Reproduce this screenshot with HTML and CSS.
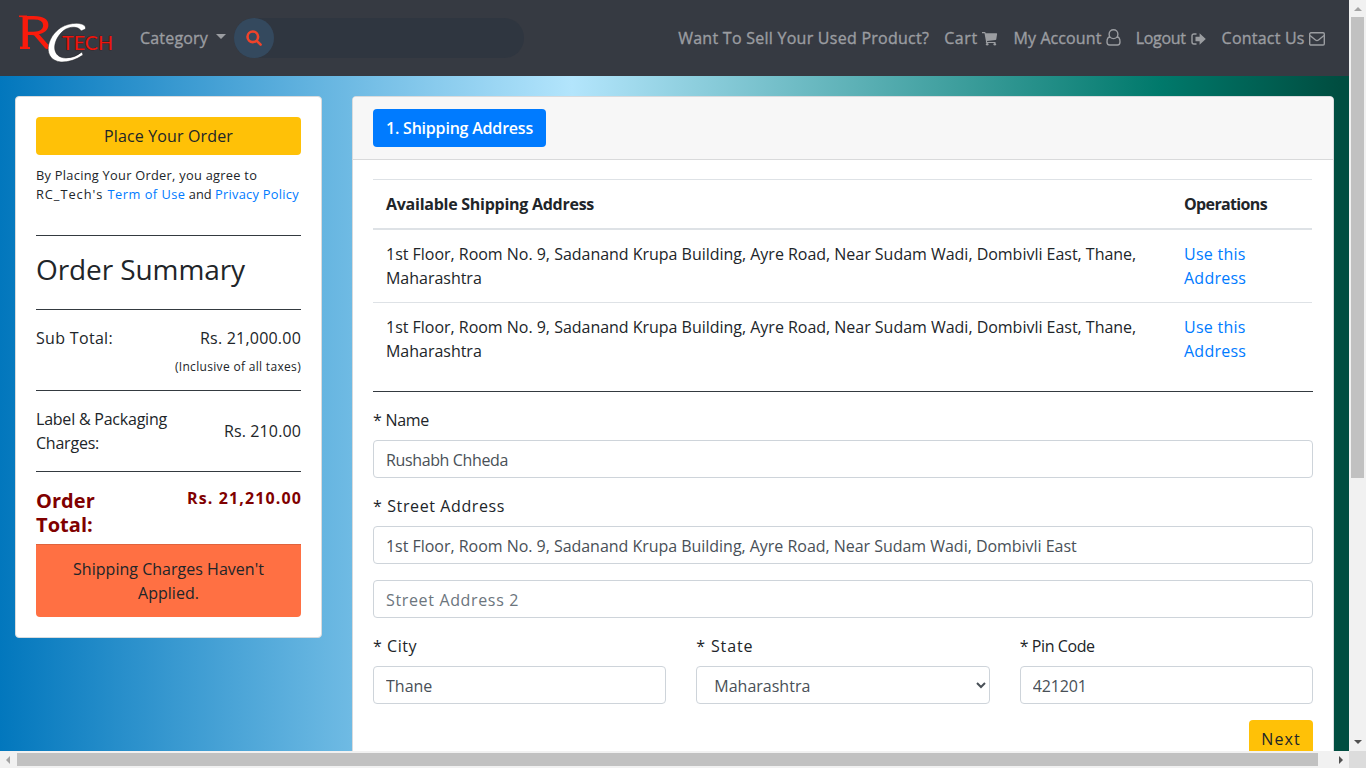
FILE: index.html
```html
<!DOCTYPE html>
<html lang="en">
<head>
<meta charset="utf-8">
<title>RC Tech - Checkout</title>
<link rel="stylesheet" href="styles.css">
</head>
<body>
<div class="window">
  <div class="page">
    <nav class="navbar">
      <svg class="logo" width="100" height="50" viewBox="0 0 100 50">
        <g class="logo-r"><text transform="translate(1.500 36) scale(1.18 1)" font-size="47">R</text><path d="M3 2.500H11V4.500L3 4ZM4 33.500L14 34V36H4ZM29 30L34 33Q38 40 42 45Q36 42 31 35Z"/></g>
        <path class="logo-c" d="M65 18C64 14 54 12 47 18C35 29 36 45 50 45Q59 45 66 39L67 42Q56 49.500 45 49C26 47 30 24 45 14.500C56 8 71 9.500 69.500 16Z"/>
        <text class="logo-tech" x="46" y="37" textLength="51" lengthAdjust="spacingAndGlyphs">TECH</text>
      </svg>
      <a class="link category">Category</a><span class="caret"></span>
      <div class="search"><span class="search-btn"><svg width="16" height="16" viewBox="0 0 16 16"><circle cx="6.8" cy="6.8" r="5.3"/><path d="M10.8 10.8L14.6 14.6"/></svg></span></div>
      <div class="links">
        <a class="link sell">Want To Sell Your Used Product?</a>
        <a class="link cart">Cart <svg width="16" height="14" viewBox="0 0 16 14"><path class="fill" d="M0 0H2.8Q3.4 0 3.7 1.2H14.5Q15.2 1.2 15.1 2L14.3 7.2Q14.2 7.9 13.4 8L5 8.9L5.2 9.9H13.5V11H4.5Q3.7 11 3.8 10.2L4 9.6L2.5 1.2H0Z"/><circle class="fill" cx="5.2" cy="12.2" r="1.3"/><circle class="fill" cx="12.8" cy="12.2" r="1.3"/></svg></a>
        <a class="link account">My Account <svg width="15" height="17" viewBox="0 0 15 17"><path class="line" d="M4 8C2 8 1 10 1 13Q1 16 3.6 16H11.4Q14 16 14 13C14 10 13 8 11 8M7.5 .8A4 4 0 0 1 7.5 9.6A4 4 0 0 1 7.5 .8Z"/></svg></a>
        <a class="link logout">Logout <svg width="15" height="12" viewBox="0 0 15 12"><path class="line" d="M5.5 1H3Q1 1 1 3V9Q1 11 3 11H5.5"/><path class="fill" d="M4.5 3.8H8.6V.3L14.8 6L8.6 11.7V8.2H4.5Z"/></svg></a>
        <a class="link contact">Contact Us <svg width="16" height="14" viewBox="0 0 16 14"><rect class="line" x=".7" y=".8" width="14.6" height="12.2" rx="1.2"/><path class="line" d="M1 3.5L6.5 8Q8 9.2 9.5 8L15 3.5"/></svg></a>
      </div>
    </nav>

    <div class="columns">
      <aside class="card summary">
        <button class="btn place">Place Your Order</button>
        <p class="terms"><span class="t-agree">By Placing Your Order, you agree to</span><br><span class="t-rc">RC_Tech's</span> <a class="t-use">Term of Use</a> <span class="t-and">and</span> <a class="t-priv">Privacy Policy</a></p>
        <hr>
        <h3>Order Summary</h3>
        <hr>
        <div class="row"><span class="sub-label">Sub Total:</span><span class="sub-price">Rs. 21,000.00</span></div>
        <div class="taxes">(Inclusive of all taxes)</div>
        <hr>
        <div class="row middle"><span class="pack-label">Label &amp; Packaging Charges:</span><span class="pack-price">Rs. 210.00</span></div>
        <hr>
        <div class="row total"><h5>Order Total:</h5><b>Rs. 21,210.00</b></div>
        <div class="notice">Shipping Charges Haven't Applied.</div>
      </aside>

      <main class="card shipping">
        <header class="card-header"><button class="btn step">1. Shipping Address</button></header>
        <div class="card-body">
          <table>
            <thead><tr><th class="th-address">Available Shipping Address</th><th class="th-op">Operations</th></tr></thead>
            <tbody>
              <tr><td>1st Floor, Room No. 9, Sadanand Krupa Building, Ayre Road, Near Sudam Wadi, Dombivli East, Thane,<br>Maharashtra</td><td class="use"><a>Use this<br>Address</a></td></tr>
              <tr><td>1st Floor, Room No. 9, Sadanand Krupa Building, Ayre Road, Near Sudam Wadi, Dombivli East, Thane,<br>Maharashtra</td><td class="use"><a>Use this<br>Address</a></td></tr>
            </tbody>
          </table>
          <hr class="divider">
          <div class="group"><label class="l-name">* Name</label><input class="i-name" value="Rushabh Chheda"></div>
          <div class="group"><label class="l-street">* Street Address</label><input class="i-street" value="1st Floor, Room No. 9, Sadanand Krupa Building, Ayre Road, Near Sudam Wadi, Dombivli East"></div>
          <div class="group"><input class="i-street2" placeholder="Street Address 2"></div>
          <div class="thirds">
            <div class="group"><label class="l-city">* City</label><input value="Thane"></div>
            <div class="group"><label class="l-state">* State</label><select><option>Maharashtra</option></select></div>
            <div class="group"><label class="l-pin">* Pin Code</label><input class="i-pin" value="421201"></div>
          </div>
          <div class="actions"><button class="btn next">Next</button></div>
        </div>
      </main>
    </div>
  </div>
  <div class="vbar"><i class="arrow up"></i><span class="vthumb"></span><i class="arrow down"></i></div>
  <div class="hbar"><i class="arrow left"></i><span class="hthumb"></span><i class="arrow right"></i></div>
  <div class="corner"></div>
</div>
</body>
</html>
```
FILE: styles.css
```css
*{box-sizing:border-box}
body{margin:0;overflow:hidden;font:16px/24px "Comic Sans MS","Open Sans",sans-serif;color:#212529}
button,input,select{font:inherit;color:inherit}
a{color:#007bff;text-decoration:none}
.window{display:grid;grid-template:751px 17px / 1349px 17px;width:1366px;height:768px}
.page{overflow:hidden;background:linear-gradient(90deg,#0277bd 0,#b3e5fc 572px,#00796b 1160px,#004d40 1340px)}

/* Navigation */
.navbar{display:flex;align-items:center;height:76px;padding:0 24px 0 16px;background:#363a42}
.logo{flex:none;margin-right:24px;overflow:visible}
.logo-r text{font-family:Lato,sans-serif;font-weight:400}
.logo-r{fill:#f91b0c}
.logo-c{fill:#fff;stroke:#202227;stroke-width:.5}
.logo-tech{font:20px Lato,sans-serif;fill:#ed160d;stroke:#3a1215;stroke-width:.6;paint-order:stroke}
.link{color:#9b9da1;-webkit-text-stroke:.35px #9b9da1;white-space:nowrap}
.category{letter-spacing:.18px}
.caret{margin:-3px 8px 0 8px;border:5px solid transparent;border-top-color:#9b9da1;border-bottom:0}
.search{width:290px;height:40px;border-radius:20px;background:#2f3640}
.search-btn{display:grid;place-items:center;width:40px;height:40px;border-radius:50%;background:#34495e}
.search-btn svg{fill:none;stroke:#f0432a;stroke-width:2.6;stroke-linecap:round}
.links{display:flex;align-items:center;gap:15px;margin-left:auto}
.link svg{vertical-align:-2px}
.links .cart svg{margin-left:-1px}
.links .logout svg{margin-left:1px;vertical-align:-1px}
.fill{fill:#9b9da1}
.line{fill:none;stroke:#9b9da1;stroke-width:1.4}
.sell{letter-spacing:.26px}
.cart{letter-spacing:.6px;margin-right:1px}
.account{letter-spacing:.1px}
.logout{letter-spacing:-.3px;margin-right:1px}
.contact{letter-spacing:.21px}

/* Cards */
.columns{display:flex;align-items:flex-start;gap:30px;padding:20px 15px}
.card{border:1px solid #d9dbdd;border-radius:4px;background:#fff}
.btn{height:38px;padding:0;border:0;border-radius:4px;background:#ffc107}
.place{display:block;width:100%;letter-spacing:.14px}
.summary{width:307px;height:542px;padding:20px}
hr{height:1px;margin:16px 0;border:0;background:#343a40}
.terms{height:64px;margin:11px 0 0;font-size:12.8px;line-height:19px;white-space:nowrap}
.t-agree{letter-spacing:.28px}
.t-rc{letter-spacing:.95px;margin-right:1px}
.t-use{letter-spacing:.49px}
.t-priv{letter-spacing:.29px}
.terms + hr{margin-top:5px}
h3{margin:0;height:41px;font-size:28px;font-weight:400;line-height:34px;letter-spacing:-.09px}
.row{display:flex;justify-content:space-between;white-space:nowrap}
.sub-label{letter-spacing:.32px}
.sub-price{letter-spacing:.21px}
.taxes{height:24px;padding-top:5px;font-size:12px;line-height:24px;text-align:right;letter-spacing:.32px}
.middle{align-items:center}
.pack-label{width:140px;white-space:normal;letter-spacing:-.22px}
.pack-price{letter-spacing:.12px}
.total{height:56px;color:#800000}
.total b{margin-right:-1px;line-height:20px;letter-spacing:1.12px}
h5{width:80px;margin:1px 0 0;font-size:20px;font-weight:700;white-space:normal;letter-spacing:.05px}
.notice{height:73px;padding:12px 20px;border-top:1px solid #df633d;border-radius:0 0 4px 4px;background:#ff7043;text-align:center;letter-spacing:.02px}

/* Shipping form */
.shipping{width:982px}
.card-header{height:63px;padding:12px 20px;border-bottom:1px solid #d9dadb;border-radius:3px 3px 0 0;background:#f7f7f7}
.step{width:173px;background:#007bff;color:#fff;font-weight:600;letter-spacing:-.2px}
.card-body{padding:19px 20px}
table{width:939px;border-collapse:separate;border-spacing:0;table-layout:fixed}
th,td{height:73px;padding:12px 12px 12px 13px;border-top:1px solid #dee2e6;text-align:left;vertical-align:top;white-space:nowrap}
td{letter-spacing:-.02px}
th{height:51px;border-bottom:2px solid #dee2e6}
tbody tr:first-child td{height:72px;border-top:0}
.th-address{width:798px;letter-spacing:-.26px}
.th-op{letter-spacing:-.64px}
.use{letter-spacing:.25px}
.divider{margin:16px 0 16px}
.group{display:flex;flex-direction:column;margin-bottom:16px}
label{margin-bottom:8px}
input,select{width:100%;height:38px;padding:2px 12px 0;border:1px solid #ced4da;border-radius:4px;background:#fff;color:#495057}
select{padding:2px 9px 0 13px;letter-spacing:0}
input::placeholder{color:#6c757d;opacity:1}
.l-name{letter-spacing:-.28px}
.i-name{letter-spacing:-.37px}
.l-street{letter-spacing:.61px}
.i-street{letter-spacing:-.03px}
.i-street2{letter-spacing:.65px}
.l-city{letter-spacing:.53px}
.l-state{letter-spacing:.85px}
.l-pin{letter-spacing:-.41px}
.i-pin{letter-spacing:-.15px}
.thirds{display:grid;grid-template-columns:repeat(3,1fr);gap:30px}
.actions{display:flex;justify-content:flex-end}
.next{width:64px;letter-spacing:1.1px}

/* Scrollbars */
.vbar,.hbar{display:flex;align-items:center;background:#f1f1f1}
.vbar{flex-direction:column}
.vthumb{width:13px;height:461px;margin:6px 0 auto;background:#c1c1c1}
.hthumb{width:1301px;height:13px;margin:0 auto 0 7px;background:#c1c1c1}
.arrow{border:4px solid transparent}
.up{margin-top:7px;border-top:0;border-bottom-color:#a3a3a3}
.down{margin-bottom:7px;border-bottom:0;border-top-color:#505050}
.left{margin-left:6px;border-left:0;border-right-color:#a3a3a3}
.right{margin-right:6px;border-right:0;border-left-color:#505050}
.corner{background:#dcdcdc}
```
